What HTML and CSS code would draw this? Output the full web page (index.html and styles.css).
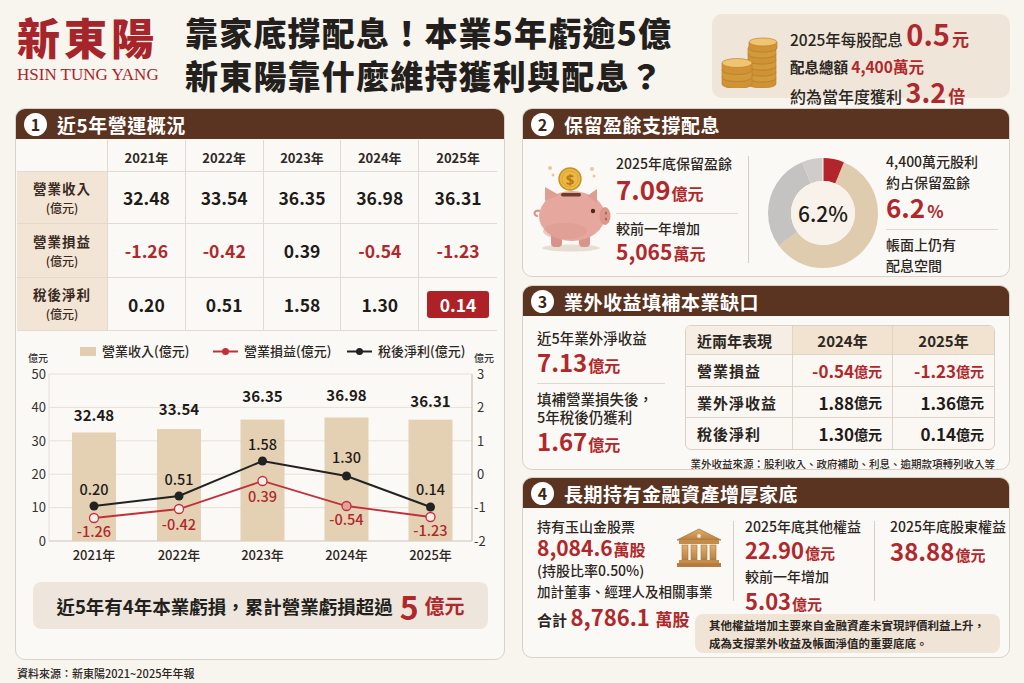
FILE: index.html
```html
<!DOCTYPE html>
<html lang="zh-Hant">
<head>
<meta charset="utf-8">
<title>新東陽</title>
<link rel="stylesheet" href="styles.css">
</head>
<body>
<div class="page">
  <header class="top">
    <div class="logo">
      <div class="logo-cn">新東陽</div>
      <div class="logo-en">HSIN TUNG YANG</div>
    </div>
    <h1 class="title">靠家底撐配息！本業5年虧逾5億<br>新東陽靠什麼維持獲利與配息？</h1>
    <div class="div-card">
      <svg class="coins" viewBox="0 0 60 56" width="60" height="56">
        <g stroke="#b57a26" stroke-width="0.6">
          <path d="M28 46v6a14 4 0 0 0 28 0v-6z" fill="#cf9336"/><ellipse cx="42" cy="46" rx="14" ry="4" fill="#e9b65c"/>
          <path d="M28 40v6a14 4 0 0 0 28 0v-6z" fill="#d39a3c"/><ellipse cx="42" cy="40" rx="14" ry="4" fill="#ebba62"/>
          <path d="M28 34v6a14 4 0 0 0 28 0v-6z" fill="#cf9336"/><ellipse cx="42" cy="34" rx="14" ry="4" fill="#e9b65c"/>
          <path d="M28 28v6a14 4 0 0 0 28 0v-6z" fill="#d39a3c"/><ellipse cx="42" cy="28" rx="14" ry="4" fill="#ebba62"/>
          <path d="M28 22v6a14 4 0 0 0 28 0v-6z" fill="#cf9336"/><ellipse cx="42" cy="22" rx="14" ry="4" fill="#e9b65c"/>
          <path d="M28 16v6a14 4 0 0 0 28 0v-6z" fill="#d39a3c"/><ellipse cx="42" cy="16" rx="14" ry="4" fill="#ebba62"/>
          <path d="M29 10v6a14 4 0 0 0 28 0v-6z" fill="#cf9336"/><ellipse cx="43" cy="10" rx="14" ry="4" fill="#f0c470"/>
          <path d="M2 45v7a15 4.5 0 0 0 30 0v-7z" fill="#cf9336"/><ellipse cx="17" cy="45" rx="15" ry="4.5" fill="#e9b65c"/>
          <path d="M2 38v7a15 4.5 0 0 0 30 0v-7z" fill="#d39a3c"/><ellipse cx="17" cy="38" rx="15" ry="4.5" fill="#ebba62"/>
          <path d="M2 31v7a15 4.5 0 0 0 30 0v-7z" fill="#cf9336"/><ellipse cx="17" cy="31" rx="15" ry="4.5" fill="#f0c470"/>
        </g>
      </svg>
      <div class="div-text">
        <div class="dl1">2025年每股配息 <span class="red n29">0.5</span><span class="red u17">元</span></div>
        <div class="dl2"><b>配息總額</b> <span class="red m15">4,400萬元</span></div>
        <div class="dl3">約為當年度獲利 <span class="red n27">3.2</span><span class="red u17">倍</span></div>
      </div>
    </div>
  </header>

  <main class="grid">
    <section class="panel p1">
      <div class="ph"><span class="num">1</span>近5年營運概況</div>
      <div class="tbl">
        <div class="c hd"></div><div class="c hd">2021年</div><div class="c hd">2022年</div><div class="c hd">2023年</div><div class="c hd">2024年</div><div class="c hd">2025年</div>
        <div class="c lb">營業收入<small>(億元)</small></div><div class="c v">32.48</div><div class="c v">33.54</div><div class="c v">36.35</div><div class="c v">36.98</div><div class="c v">36.31</div>
        <div class="c lb">營業損益<small>(億元)</small></div><div class="c v neg">-1.26</div><div class="c v neg">-0.42</div><div class="c v">0.39</div><div class="c v neg">-0.54</div><div class="c v neg">-1.23</div>
        <div class="c lb">稅後淨利<small>(億元)</small></div><div class="c v">0.20</div><div class="c v">0.51</div><div class="c v">1.58</div><div class="c v">1.30</div><div class="c v"><span class="hl">0.14</span></div>
      </div>
      <svg class="chart" viewBox="16 332 488 245" width="488" height="245">
        <rect x="80" y="348" width="16" height="9" fill="#e2cdb0"/>
        <text x="102" y="357" class="lg">營業收入(億元)</text>
        <line x1="213" y1="352.5" x2="238" y2="352.5" stroke="#c0303a" stroke-width="2"/>
        <circle cx="225.5" cy="352.5" r="3.5" fill="#c0303a"/>
        <text x="244" y="357" class="lg">營業損益(億元)</text>
        <line x1="347" y1="352.5" x2="372" y2="352.5" stroke="#222" stroke-width="2"/>
        <circle cx="359.5" cy="352.5" r="3.5" fill="#222"/>
        <text x="378" y="357" class="lg">稅後淨利(億元)</text>
        <text x="38" y="363" class="au" text-anchor="middle">億元</text>
        <text x="484" y="363" class="au" text-anchor="middle">億元</text>
        <g stroke="#e7e0d7" stroke-width="1">
          <line x1="49" y1="375" x2="472" y2="375"/>
          <line x1="49" y1="408.4" x2="472" y2="408.4"/>
          <line x1="49" y1="441.8" x2="472" y2="441.8"/>
          <line x1="49" y1="475.2" x2="472" y2="475.2"/>
          <line x1="49" y1="508.6" x2="472" y2="508.6"/>
          <line x1="49" y1="375" x2="49" y2="542"/>
        </g>
        <g stroke="#cdc4b9" stroke-width="1.2">
          <line x1="49" y1="542" x2="472" y2="542"/>
          <line x1="472" y1="375" x2="472" y2="542"/>
        </g>
        <g class="ax" text-anchor="end">
          <text x="46" y="380">50</text><text x="46" y="413">40</text><text x="46" y="447">30</text>
          <text x="46" y="480">20</text><text x="46" y="513">10</text><text x="46" y="547">0</text>
        </g>
        <g class="ax" text-anchor="start">
          <text x="477" y="380">3</text><text x="477" y="413">2</text><text x="477" y="447">1</text>
          <text x="477" y="480">0</text><text x="474" y="513">-1</text><text x="474" y="547">-2</text>
        </g>
        <g fill="#e4d0b3">
          <rect x="72" y="433.5" width="44" height="108.5"/>
          <rect x="157" y="430" width="44" height="112"/>
          <rect x="240.5" y="420.6" width="44" height="121.4"/>
          <rect x="324.5" y="418.5" width="44" height="123.5"/>
          <rect x="408.5" y="420.7" width="44" height="121.3"/>
        </g>
        <g class="bv" text-anchor="middle">
          <text x="94" y="422">32.48</text><text x="179" y="416">33.54</text><text x="262.5" y="403">36.35</text>
          <text x="346.5" y="402">36.98</text><text x="430.5" y="408">36.31</text>
        </g>
        <polyline points="94,519 179,510 262.5,482 346.5,507 430.5,518" fill="none" stroke="#c0303a" stroke-width="1.8"/>
        <polyline points="94,507 179,497 262.5,462 346.5,477 430.5,508" fill="none" stroke="#222" stroke-width="2"/>
        <g fill="#fbeeea" stroke="#c0303a" stroke-width="1.3">
          <circle cx="94" cy="519" r="4.5"/><circle cx="179" cy="510" r="4.5"/><circle cx="262.5" cy="482" r="4.5"/>
          <circle cx="346.5" cy="507" r="4.5" fill="#e3a39c"/><circle cx="430.5" cy="518" r="4.5"/>
        </g>
        <g fill="#222">
          <circle cx="94" cy="507" r="4.5"/><circle cx="179" cy="497" r="4.5"/><circle cx="262.5" cy="462" r="4.5"/>
          <circle cx="346.5" cy="477" r="4.5"/><circle cx="430.5" cy="508" r="4.5"/>
        </g>
        <g class="lv" text-anchor="middle">
          <text x="94" y="496">0.20</text><text x="179" y="486">0.51</text><text x="262.5" y="451">1.58</text>
          <text x="346.5" y="464">1.30</text><text x="430.5" y="496">0.14</text>
        </g>
        <g class="lr" text-anchor="middle">
          <text x="94" y="538">-1.26</text><text x="179" y="531">-0.42</text><text x="262.5" y="503">0.39</text>
          <text x="346.5" y="526">-0.54</text><text x="430.5" y="537">-1.23</text>
        </g>
        <g class="yr" text-anchor="middle">
          <text x="94" y="561">2021年</text><text x="179" y="561">2022年</text><text x="262.5" y="561">2023年</text>
          <text x="346.5" y="561">2024年</text><text x="430.5" y="561">2025年</text>
        </g>
      </svg>
      <div class="summary">近5年有4年本業虧損，累計營業虧損超過<span class="s5">5</span><span class="su">億元</span></div>
    </section>

    <div class="rcol">
      <section class="panel p2">
        <div class="ph"><span class="num">2</span>保留盈餘支撐配息</div>
        <div class="pb2">
          <svg class="piggy" viewBox="0 0 84 94" width="84" height="94">
            <ellipse cx="42" cy="89" rx="29" ry="3.5" fill="#e6ddd3"/>
            <g fill="#e9c89a">
              <circle cx="21" cy="9" r="2"/><circle cx="24" cy="16" r="1.5"/>
              <circle cx="63" cy="10" r="2"/><circle cx="65" cy="17" r="1.5"/>
            </g>
            <path d="M11 52c-6-2-7 4-3 5" fill="none" stroke="#d99489" stroke-width="2.2" stroke-linecap="round"/>
            <rect x="22" y="70" width="11" height="18" rx="4" fill="#d8948a"/>
            <rect x="50" y="70" width="11" height="18" rx="4" fill="#d8948a"/>
            <ellipse cx="43" cy="57" rx="33" ry="25" fill="#e6a89e"/>
            <path d="M16 42 L16 28 L30 36 Z" fill="#e09d92"/>
            <path d="M58 37 L68 30 L68 44 Z" fill="#e09d92"/>
            <ellipse cx="36" cy="72" rx="22" ry="8" fill="#db988e" opacity="0.5"/>
            <ellipse cx="76" cy="57" rx="5.5" ry="9" fill="#dc968c"/>
            <ellipse cx="77" cy="54" rx="1" ry="1.6" fill="#a8615a"/>
            <ellipse cx="77" cy="60" rx="1" ry="1.6" fill="#a8615a"/>
            <circle cx="64" cy="52" r="2.2" fill="#4b2a22"/>
            <rect x="32" y="34" width="20" height="3.5" rx="1.7" fill="#6e3b2e"/>
            <circle cx="41" cy="20" r="11" fill="#ecb845" stroke="#c98f22" stroke-width="1.4"/>
            <circle cx="41" cy="20" r="8" fill="none" stroke="#d7a032" stroke-width="0.8"/>
            <text x="41" y="25.5" class="dollar" text-anchor="middle">$</text>
          </svg>
          <div class="t2a">
            <div class="lbl">2025年底保留盈餘</div>
            <div class="bl"><span class="red n26">7.09</span><span class="red u16">億元</span></div>
            <div class="hr"></div>
            <div class="lbl">較前一年增加</div>
            <div class="ml"><span class="red n21">5,065</span><span class="red u16">萬元</span></div>
          </div>
          <div class="vdiv v2"></div>
          <div class="donut">
            <svg viewBox="0 0 112 112" width="112" height="112">
              <g transform="rotate(-90 56 56)" fill="none" stroke-width="23">
                <circle cx="56" cy="56" r="43.5" stroke="#dfcbae" stroke-dasharray="159.9 273.32" stroke-dashoffset="-16.95"/>
                <circle cx="56" cy="56" r="43.5" stroke="#c5c3c1" stroke-dasharray="79 273.32" stroke-dashoffset="-176.85"/>
                <circle cx="56" cy="56" r="43.5" stroke="#cfcdca" stroke-dasharray="17.5 273.32" stroke-dashoffset="-255.85"/>
                <circle cx="56" cy="56" r="43.5" stroke="#b3252b" stroke-dasharray="16.95 273.32" stroke-dashoffset="0"/>
              </g>
              <line x1="56" y1="0" x2="56" y2="24" stroke="#fbf9f6" stroke-width="1"/>
              <circle cx="56" cy="56" r="32" fill="#f8f2ea"/>
            </svg>
            <span class="dtext">6.2%</span>
          </div>
          <div class="t2b">
            <div class="lbl">4,400萬元股利</div>
            <div class="lbl">約占保留盈餘</div>
            <div class="bl2"><span class="red n26">6.2</span><span class="red u17">%</span></div>
            <div class="hr"></div>
            <div class="lbl">帳面上仍有</div>
            <div class="lbl">配息空間</div>
          </div>
        </div>
      </section>

      <section class="panel p3">
        <div class="ph"><span class="num">3</span>業外收益填補本業缺口</div>
        <div class="pb3">
          <div class="t3a">
            <div class="lbl">近5年業外淨收益</div>
            <div class="bl3"><span class="red n24">7.13</span><span class="red u16">億元</span></div>
            <div class="hr h3"></div>
            <div class="lbl s18">填補營業損失後，</div>
            <div class="lbl s18">5年稅後仍獲利</div>
            <div class="bl3"><span class="red n24">1.67</span><span class="red u16">億元</span></div>
          </div>
          <div class="t3r">
            <div class="t3">
              <div class="tc th th0">近兩年表現</div><div class="tc th thc">2024年</div><div class="tc th thc">2025年</div>
              <div class="tc tl">營業損益</div><div class="tc tv red">-0.54<small>億元</small></div><div class="tc tv red">-1.23<small>億元</small></div>
              <div class="tc tl">業外淨收益</div><div class="tc tv">1.88<small>億元</small></div><div class="tc tv">1.36<small>億元</small></div>
              <div class="tc tl">稅後淨利</div><div class="tc tv">1.30<small>億元</small></div><div class="tc tv">0.14<small>億元</small></div>
            </div>
            <div class="foot">業外收益來源：股利收入、政府補助、利息、逾期款項轉列收入等</div>
          </div>
        </div>
      </section>

      <section class="panel p4">
        <div class="ph"><span class="num">4</span>長期持有金融資產增厚家底</div>
        <div class="pb4">
          <div class="c4a">
            <div class="lb4">持有玉山金股票</div>
            <div class="l22"><span class="red n21">8,084.6</span><span class="red u16">萬股</span></div>
            <div class="lb4">(持股比率0.50%)</div>
            <div class="lb4 sm">加計董事、經理人及相關事業</div>
            <div class="l28"><span class="he">合計</span> <span class="red n22">8,786.1</span> <span class="red u17">萬股</span></div>
          </div>
          <svg class="bank" viewBox="0 0 46 40" width="46" height="40">
            <defs>
              <linearGradient id="gd" x1="0" y1="0" x2="0" y2="1">
                <stop offset="0" stop-color="#e0b06e"/><stop offset="1" stop-color="#b98040"/>
              </linearGradient>
            </defs>
            <polygon points="23,1 1,12 45,12" fill="url(#gd)" stroke="#a9733a" stroke-width="0.8"/>
            <circle cx="23" cy="8" r="2" fill="#f6e3c4"/>
            <rect x="3" y="12" width="40" height="4" fill="#c48c4c"/>
            <g fill="url(#gd)" stroke="#a9733a" stroke-width="0.6">
              <rect x="6" y="17" width="6" height="15"/><rect x="15" y="17" width="6" height="15"/>
              <rect x="25" y="17" width="6" height="15"/><rect x="34" y="17" width="6" height="15"/>
            </g>
            <rect x="3" y="32" width="40" height="3" fill="#c48c4c"/>
            <rect x="1" y="35" width="44" height="4" fill="#b57c3e"/>
          </svg>
          <div class="vdiv v4a"></div>
          <div class="c4b">
            <div class="lb4">2025年底其他權益</div>
            <div class="l26"><span class="red n22">22.90</span><span class="red u15">億元</span></div>
            <div class="lb4">較前一年增加</div>
            <div class="l28b"><span class="red n22">5.03</span><span class="red u15">億元</span></div>
          </div>
          <div class="vdiv v4b"></div>
          <div class="c4c">
            <div class="lb4">2025年底股東權益</div>
            <div class="l30"><span class="red n24">38.88</span><span class="red u15">億元</span></div>
          </div>
          <div class="note">其他權益增加主要來自金融資產未實現評價利益上升，<br>成為支撐業外收益及帳面淨值的重要底底。</div>
        </div>
      </section>
    </div>
  </main>
  <div class="source">資料來源：新東陽2021~2025年年報</div>
</div>
</body>
</html>
```

FILE: styles.css
```css
* { box-sizing: border-box; margin: 0; padding: 0; }
html, body { width: 1024px; height: 683px; overflow: hidden; }
body {
  background: #f8f4ee;
  font-family: "Noto Sans CJK TC", "Noto Sans", sans-serif;
  color: #2b2622;
}
.page { padding: 10px 14px 0 15px; }
.red { color: #b0282b; }

/* header */
.top { display: flex; height: 98px; }
.logo { width: 170px; padding: 3px 0 0 2px; color: #a6252b; }
.logo-cn {
  font-family: "Noto Sans CJK TC", serif;
  font-weight: 900; font-size: 43px; line-height: 46px; letter-spacing: 4px;
}
.logo-en { font-family: "Liberation Serif", serif; font-size: 17px; line-height: 20px; margin-top: 6px; }
.title {
  font-family: "Noto Sans CJK TC", sans-serif;
  font-weight: 900; font-size: 33px; line-height: 43px; color: #231f1c; margin-top: 1px;
  letter-spacing: 1.2px;
}
.div-card {
  margin-left: auto; margin-top: 4px; width: 298px; height: 84px;
  background: #efe5d9; border-radius: 10px;
  display: flex; align-items: center; padding-left: 8px;
}
.coins { flex: none; margin-top: 8px; }
.div-text { margin-left: 10px; font-size: 15.5px; font-weight: 500; color: #2a2622; align-self: flex-start; padding-top: 4px; }
.dl1 { line-height: 30px; }
.dl2 { line-height: 24px; font-size: 14.5px; }
.dl2 b { font-weight: 700; }
.dl3 { line-height: 26px; font-size: 16px; }
.n29 { font-size: 29px; font-weight: 700; }
.n27 { font-size: 27px; font-weight: 700; }
.n26 { font-size: 26px; font-weight: 700; }
.n24 { font-size: 24px; font-weight: 700; }
.n22 { font-size: 22px; font-weight: 700; }
.n21 { font-size: 21px; font-weight: 700; }
.u17 { font-size: 17px; font-weight: 700; margin-left: 2px; }
.u16 { font-size: 16px; font-weight: 700; margin-left: 1px; }
.u15 { font-size: 15px; font-weight: 700; margin-left: 1px; }
.m15 { font-size: 15.5px; font-weight: 700; }

/* layout */
.grid { display: grid; grid-template-columns: 490px 488px; column-gap: 17px; }
.rcol { display: flex; flex-direction: column; }
.panel {
  background: #fbf9f6; border: 1px solid #d9d1c8; border-radius: 10px; overflow: hidden;
}
.ph {
  height: 30px; background: #5a3321; color: #fff;
  display: flex; align-items: center; padding-left: 8px; gap: 10px;
  font-size: 19px; font-weight: 700; letter-spacing: 0.5px;
}
.num {
  width: 23px; height: 23px; border-radius: 50%; background: #fff; color: #3b2418;
  display: flex; align-items: center; justify-content: center;
  font-size: 16px; font-weight: 700; letter-spacing: 0;
}

/* panel 1 */
.p1 { height: 552px; }
.tbl {
  display: grid; grid-template-columns: 91px repeat(5, 1fr);
  grid-template-rows: 32px 52px 54px 53px;
  margin: 1px 7px 0 1px;
}
.c {
  border-right: 1px solid #e2dad0; border-bottom: 1px solid #e2dad0;
  display: flex; align-items: center; justify-content: center;
}
.c:nth-child(6n) { border-right: none; }
.hd { font-size: 13px; font-weight: 700; color: #2e2925; padding-top: 4px; }
.lb {
  background: #f2e5d5; flex-direction: column;
  font-size: 13.5px; font-weight: 700; color: #3a2a22; line-height: 19px; letter-spacing: 1px;
}
.lb small { font-size: 12px; font-weight: 500; letter-spacing: 0; }
.v { font-size: 17.5px; font-weight: 600; color: #1f1b18; }
.v.neg { color: #b0282b; }
.hl {
  background: #ae2227; color: #fff; border-radius: 3px;
  width: 62px; height: 27px; display: flex; align-items: center; justify-content: center;
}
.chart { display: block; }
.chart text { font-family: "Noto Sans CJK TC", "Noto Sans", sans-serif; }
.chart .lg { font-size: 13px; font-weight: 500; fill: #2b2622; }
.chart .au { font-size: 10px; font-weight: 500; fill: #333; }
.chart .ax text { font-size: 13px; fill: #333; }
.chart .bv text { font-size: 15px; font-weight: 600; fill: #1f1b18; }
.chart .lv text { font-size: 14.5px; font-weight: 500; fill: #1f1b18; }
.chart .lr text { font-size: 14.5px; font-weight: 500; fill: #b0282b; }
.chart .yr text { font-size: 13px; font-weight: 500; fill: #2b2622; }
.dollar { font-family: "Noto Sans", sans-serif; font-size: 15px; font-weight: 700; fill: #b67a12; }
.summary {
  margin: 6px 16px 0 17px; height: 47px; background: #eee6dd; border-radius: 8px;
  display: flex; align-items: center; justify-content: center;
  font-size: 18.5px; font-weight: 700; color: #231f1c;
}
.s5 { color: #b0282b; font-size: 32px; font-weight: 700; margin: 0 6px 0 7px; line-height: 30px; }
.su { color: #b0282b; font-size: 20px; font-weight: 700; }

/* panel 2 */
.p2 { height: 169px; }
.pb2 { display: flex; height: 139px; }
.piggy { flex: none; margin: 20px 0 0 6px; }
.lbl { font-size: 14px; font-weight: 500; line-height: 20px; color: #2b2622; white-space: nowrap; }
.t2a { width: 122px; margin-left: 3px; padding-top: 14px; }
.bl { line-height: 32px; }
.ml { line-height: 27px; }
.hr { border-top: 1px solid #e0d8ce; margin: 4px 0 4px; }
.vdiv { width: 1px; background: #d6cec4; flex: none; }
.v2 { margin: 17px 0 0 10px; height: 107px; }
.donut { position: relative; width: 112px; height: 112px; margin: 18px 0 0 18px; flex: none; }
.donut svg { display: block; }
.dtext {
  position: absolute; left: 0; top: 0; width: 112px; height: 112px;
  display: flex; align-items: center; justify-content: center;
  font-size: 21px; font-weight: 500; color: #1f1b18;
}
.t2b { margin-left: 7px; padding-top: 12px; width: 112px; }
.t2b .lbl { line-height: 21px; }
.bl2 { line-height: 28px; }

/* panel 3 */
.p3 { height: 185px; margin-top: 8px; }
.pb3 { display: flex; padding-left: 14px; }
.t3a { width: 148px; padding-top: 12px; }
.t3a .lbl { font-size: 14.5px; line-height: 19px; }
.t3a .s18 { line-height: 18px; }
.bl3 { line-height: 30px; }
.h3 { margin: 3px 20px 6px 0; }
.t3r { margin-top: 9px; width: 310px; }
.t3 {
  display: grid; grid-template-columns: 107px 100px 1fr; grid-template-rows: 29px 32px 31px 31px;
  border: 1px solid #d9d0c6; border-radius: 6px; overflow: hidden; background: #fbf8f4;
}
.tc {
  border-right: 1px solid #ddd4ca; border-bottom: 1px solid #ddd4ca;
  display: flex; align-items: center;
}
.tc:nth-child(3n) { border-right: none; }
.tc:nth-last-child(-n+3) { border-bottom: none; }
.th { font-size: 15px; font-weight: 700; color: #2b2622; }
.th0 { background: #f6eee4; padding-left: 11px; }
.thc { background: #f1e3d0; justify-content: center; }
.tl { padding-left: 11px; font-size: 15px; font-weight: 700; color: #2b2622; letter-spacing: 1px; }
.tv { justify-content: flex-end; padding-right: 10px; font-size: 17px; font-weight: 600; color: #1f1b18; }
.tv.red { color: #b0282b; }
.tv small { font-size: 14px; font-weight: 700; }
.foot { text-align: right; font-size: 10.5px; font-weight: 500; line-height: 14px; margin-top: 7px; color: #2b2622; }

/* panel 4 */
.p4 { height: 181px; margin-top: 7px; }
.pb4 {
  display: grid;
  grid-template-columns: 139px 57px 1px 140px 1px 1fr;
  grid-template-rows: 98px 39px;
  padding: 8px 0 0 14px;
}
.c4a { grid-column: 1; grid-row: 1 / span 2; white-space: nowrap; }
.lb4 { font-size: 14px; font-weight: 500; line-height: 20px; color: #2b2622; white-space: nowrap; }
.lb4.sm { font-size: 13.5px; line-height: 22px; }
.l22 { line-height: 22px; }
.l26 { line-height: 26px; }
.l28 { line-height: 28px; }
.l28b { line-height: 28px; }
.l30 { line-height: 30px; }
.he { font-size: 15px; font-weight: 700; }
.bank { grid-column: 2; grid-row: 1; margin: 12px 0 0 0; }
.v4a { grid-column: 3; grid-row: 1; margin-top: 5px; height: 80px; }
.c4b { grid-column: 4; grid-row: 1; padding-left: 11px; }
.v4b { grid-column: 5; grid-row: 1; margin-top: 5px; height: 80px; }
.c4c { grid-column: 6; grid-row: 1; padding-left: 15px; }
.note {
  grid-column: 2 / -1; grid-row: 2; margin: 0 9px 0 19px;
  background: #efe4d6; border-radius: 8px; padding: 2px 0 0 14px;
  font-size: 11.5px; font-weight: 700; line-height: 18px; color: #2b2622;
}

/* footer */
.source { font-size: 11px; font-weight: 500; line-height: 14px; margin: 6px 0 0 2px; color: #2b2622; }
```
